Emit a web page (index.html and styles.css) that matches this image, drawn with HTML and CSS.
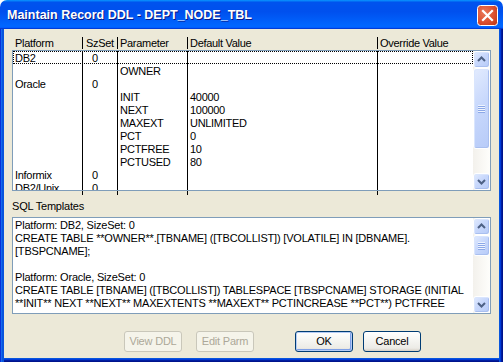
FILE: index.html
```html
<!DOCTYPE html>
<html>
<head>
<meta charset="utf-8">
<link rel="stylesheet" href="styles.css">
</head>
<body>
<div class="window">
  <div class="titlebar">
    <span class="title">Maintain Record DDL - DEPT_NODE_TBL</span>
    <div class="close">
      <svg width="21" height="21" viewBox="0 0 21 21">
        <defs>
          <radialGradient id="cg" cx="0.35" cy="0.35" r="0.8">
            <stop offset="0" stop-color="#E9795A"/>
            <stop offset="0.6" stop-color="#DC5030"/>
            <stop offset="1" stop-color="#C23A1A"/>
          </radialGradient>
        </defs>
        <rect x="0.5" y="0.5" width="20" height="20" rx="3" fill="url(#cg)" stroke="#FFFFFF"/>
        <path d="M6 6 L15 15 M15 6 L6 15" stroke="#FFFFFF" stroke-width="2.2" stroke-linecap="square"/>
      </svg>
    </div>
  </div>
  <div class="client">
    <div class="ghead">
      <div class="hc c1">Platform</div>
      <div class="hc c2">SzSet</div>
      <div class="hc c3">Parameter</div>
      <div class="hc c4">Default Value</div>
      <div class="hc c5">Override Value</div>
    </div>
    <div class="listbox">
      <div class="rows">
        <div class="row focus"><div class="cell c1">DB2</div><div class="cell c2">0</div><div class="cell c3"></div><div class="cell c4"></div><div class="cell c5"></div></div>
        <div class="row"><div class="cell c1"></div><div class="cell c2"></div><div class="cell c3">OWNER</div><div class="cell c4"></div><div class="cell c5"></div></div>
        <div class="row"><div class="cell c1">Oracle</div><div class="cell c2">0</div><div class="cell c3"></div><div class="cell c4"></div><div class="cell c5"></div></div>
        <div class="row"><div class="cell c1"></div><div class="cell c2"></div><div class="cell c3">INIT</div><div class="cell c4">40000</div><div class="cell c5"></div></div>
        <div class="row"><div class="cell c1"></div><div class="cell c2"></div><div class="cell c3">NEXT</div><div class="cell c4">100000</div><div class="cell c5"></div></div>
        <div class="row"><div class="cell c1"></div><div class="cell c2"></div><div class="cell c3">MAXEXT</div><div class="cell c4">UNLIMITED</div><div class="cell c5"></div></div>
        <div class="row"><div class="cell c1"></div><div class="cell c2"></div><div class="cell c3">PCT</div><div class="cell c4">0</div><div class="cell c5"></div></div>
        <div class="row"><div class="cell c1"></div><div class="cell c2"></div><div class="cell c3">PCTFREE</div><div class="cell c4">10</div><div class="cell c5"></div></div>
        <div class="row"><div class="cell c1"></div><div class="cell c2"></div><div class="cell c3">PCTUSED</div><div class="cell c4">80</div><div class="cell c5"></div></div>
        <div class="row"><div class="cell c1">Informix</div><div class="cell c2">0</div><div class="cell c3"></div><div class="cell c4"></div><div class="cell c5"></div></div>
        <div class="row"><div class="cell c1">DB2/Unix</div><div class="cell c2">0</div><div class="cell c3"></div><div class="cell c4"></div><div class="cell c5"></div></div>
      </div>
      <div class="vscroll">
        <div class="sbtn"><svg width="15" height="15" viewBox="0 0 15 15"><path d="M4 9 L7.5 5.5 L11 9" fill="none" stroke="#4D6185" stroke-width="2"/></svg></div>
        <div class="thumb big"><div class="grip"></div></div>
        <div class="track"></div>
        <div class="sbtn"><svg width="15" height="15" viewBox="0 0 15 15"><path d="M4 6 L7.5 9.5 L11 6" fill="none" stroke="#4D6185" stroke-width="2"/></svg></div>
      </div>
    </div>
    <div class="spill"><div class="cell c1"></div><div class="cell c2"></div><div class="cell c3"></div><div class="cell c4"></div><div class="cell c5"></div></div>
    <div class="label">SQL Templates</div>
    <div class="textbox">
      <div class="sqltext">Platform: DB2, SizeSet: 0
CREATE TABLE **OWNER**.[TBNAME] ([TBCOLLIST]) [VOLATILE] IN [DBNAME].
[TBSPCNAME];

Platform: Oracle, SizeSet: 0
CREATE TABLE [TBNAME] ([TBCOLLIST]) TABLESPACE [TBSPCNAME] STORAGE (INITIAL
**INIT** NEXT **NEXT** MAXEXTENTS **MAXEXT** PCTINCREASE **PCT**) PCTFREE</div>
      <div class="vscroll">
        <div class="sbtn"><svg width="15" height="15" viewBox="0 0 15 15"><path d="M4 9 L7.5 5.5 L11 9" fill="none" stroke="#4D6185" stroke-width="2"/></svg></div>
        <div class="thumb small"><div class="grip"></div></div>
        <div class="track"></div>
        <div class="sbtn"><svg width="15" height="15" viewBox="0 0 15 15"><path d="M4 6 L7.5 9.5 L11 6" fill="none" stroke="#4D6185" stroke-width="2"/></svg></div>
      </div>
    </div>
    <div class="buttons">
      <div class="btn disabled view">View DDL</div>
      <div class="btn disabled edit">Edit Parm</div>
      <div class="btn default ok">OK</div>
      <div class="btn cancel">Cancel</div>
    </div>
  </div>
</div>
</body>
</html>
```
FILE: styles.css
```css
html, body {
  margin: 0;
  padding: 0;
}
body {
  width: 503px;
  height: 362px;
  overflow: hidden;
  background: #FFFFFF;
  font-family: "Liberation Sans", Arial, sans-serif;
  font-size: 11px;
  color: #000000;
}
.window {
  width: 503px;
  height: 362px;
  display: flex;
  flex-direction: column;
}
.titlebar {
  flex: none;
  height: 29px;
  box-sizing: border-box;
  padding: 0 5px 0 7px;
  display: flex;
  align-items: flex-start;
  border-radius: 7px 7px 0 0;
  background: linear-gradient(180deg, #0997FF 0, #0053EE 8%, #0050EE 40%, #0066FF 88%, #0066FF 93%, #005BFF 95%, #003DD7 96%, #003DD7 100%);
}
.title {
  flex: 1;
  margin-top: 8px;
  color: #FFFFFF;
  font-weight: bold;
  font-size: 12.5px;
  line-height: 15px;
  white-space: nowrap;
  text-shadow: 1px 1px 0 #0A1883;
}
.close {
  margin-top: 5px;
  width: 21px;
  height: 21px;
}
.close svg {
  display: block;
}
.client {
  flex: 1;
  background: #ECE9D8;
  padding: 6px 12px 0 12px;
  display: flex;
  flex-direction: column;
  box-shadow:
    inset 1px 0 #0831D9, inset 2px 0 #166AEE, inset 3px 0 #0855DD, inset 4px 0 #0855DD,
    inset -1px 0 #00138C, inset -2px 0 #001EA0, inset -3px 0 #003BDA, inset -4px 0 #0855DD,
    inset 0 -1px #00138C, inset 0 -2px #001EA0, inset 0 -3px #003BDA, inset 0 -4px #0855DD;
}
.ghead {
  flex: none;
  height: 15px;
  box-sizing: border-box;
  padding: 2px 0 0 1px;
  display: flex;
  align-items: flex-start;
}
.hc {
  height: 12px;
  box-sizing: border-box;
  padding-top: 1px;
  line-height: 11px;
  letter-spacing: -0.3px;
  white-space: nowrap;
  border-right: 1px solid #000000;
  padding-left: 2px;
}
.hc.c2 {
  padding-left: 3px;
}
.c1 { width: 70px; }
.c2 { width: 35px; }
.c3 { width: 70px; }
.c4 { width: 190px; }
.c5 { width: 95px; border-right: none !important; }
.listbox {
  flex: none;
  height: 141px;
  box-sizing: border-box;
  border: 1px solid #7F9DB9;
  background: #FFFFFF;
  display: flex;
}
.rows {
  width: 460px;
  height: 139px;
  overflow: hidden;
}
.row {
  display: flex;
  height: 13px;
}
.row.focus {
  outline: 1px dotted #000000;
  outline-offset: -1px;
}
.cell {
  box-sizing: border-box;
  height: 13px;
  border-right: 1px solid #000000;
  padding: 1px 0 0 2px;
  line-height: 12px;
  letter-spacing: -0.3px;
  white-space: nowrap;
  overflow: hidden;
}
.row .c2 {
  padding-left: 9px;
}
.spill {
  flex: none;
  display: flex;
  height: 4px;
  padding-left: 1px;
}
.spill .cell {
  height: 4px;
  padding: 0;
}
.vscroll {
  width: 17px;
  flex: none;
  display: flex;
  flex-direction: column;
  background: linear-gradient(90deg, #F3F1EC, #FEFEFB);
}
.sbtn, .thumb {
  flex: none;
  box-sizing: border-box;
  margin: 0;
  border: 1px solid #FFFFFF;
  border-radius: 3px;
  background: linear-gradient(135deg, #E2EBFE 0%, #C8D8FC 45%, #B7CBF8 100%);
  box-shadow: inset -1px -1px 0 #A9BFEF, inset 1px 1px 0 #D9E5FD;
  display: flex;
  align-items: center;
  justify-content: center;
}
.sbtn {
  height: 17px;
}
.sbtn svg {
  display: block;
}
.thumb.big {
  height: 81px;
}
.thumb.small {
  height: 21px;
}
.track {
  flex: 1;
}
.grip {
  width: 7px;
  height: 8px;
  background: repeating-linear-gradient(180deg, #EEF4FE 0, #EEF4FE 1px, #8CA8E8 1px, #8CA8E8 2px);
}
.label {
  flex: none;
  margin-top: 5px;
  height: 13px;
  line-height: 13px;
  letter-spacing: -0.2px;
  margin-bottom: 4px;
  padding-left: 0;
}
.textbox {
  flex: none;
  height: 97px;
  box-sizing: border-box;
  border: 1px solid #7F9DB9;
  background: #FFFFFF;
  display: flex;
}
.sqltext {
  width: 460px;
  height: 95px;
  box-sizing: border-box;
  padding: 1px 0 0 2px;
  overflow: hidden;
  white-space: pre;
  line-height: 13px;
  letter-spacing: -0.2px;
}
.buttons {
  flex: none;
  margin-top: 17px;
  display: flex;
  padding-left: 112px;
}
.btn {
  width: 58px;
  height: 21px;
  box-sizing: border-box;
  border: 1px solid #003C74;
  border-radius: 3px;
  background: linear-gradient(180deg, #FFFFFF 0%, #F4F4F0 50%, #ECEBE6 85%, #D6D0C5 100%);
  text-align: center;
  line-height: 19px;
  letter-spacing: -0.2px;
  white-space: nowrap;
}
.btn.disabled {
  border-color: #C9C7BA;
  background: #F5F4EA;
  color: #ACA899;
}
.btn.default {
  box-shadow: inset 0 0 0 1px #B4CCF5, inset -1px -1px 0 1px #7FA0E6;
}
.view { margin-right: 14px; }
.edit { margin-right: 41px; }
.ok { margin-right: 10px; }
```
